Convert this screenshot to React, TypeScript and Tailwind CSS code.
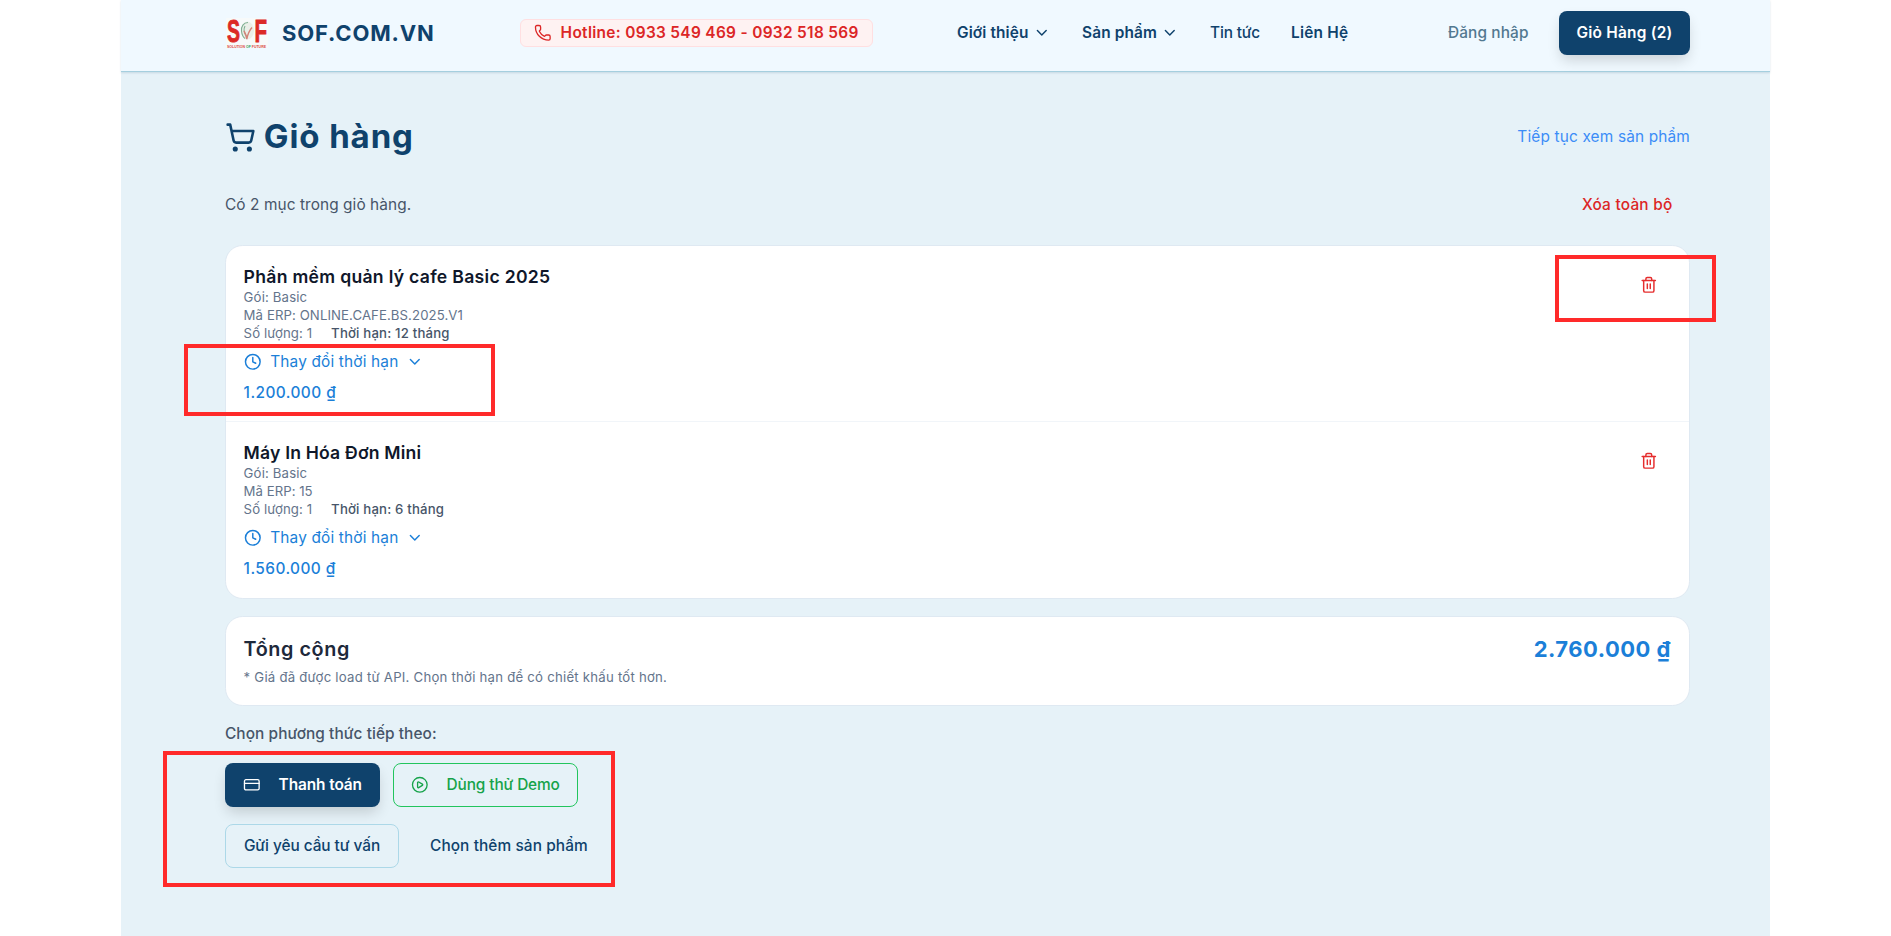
import type { ReactNode } from 'react';
import {
  ChevronDown,
  CirclePlay,
  Clock,
  CreditCard,
  Phone,
  ShoppingCart,
  Trash2,
} from 'lucide-react';

interface CartItem {
  name: string;
  nameClass: string;
  plan: string;
  erp: string;
  erpClass: string;
  quantity: number;
  duration: string;
  price: string;
}

const items: CartItem[] = [
  {
    name: 'Phần mềm quản lý cafe Basic 2025',
    nameClass: 'tracking-[0.29px]',
    plan: 'Basic',
    erp: 'ONLINE.CAFE.BS.2025.V1',
    erpClass: 'tracking-[0.09px]',
    quantity: 1,
    duration: '12 tháng',
    price: '1.200.000 ₫',
  },
  {
    name: 'Máy In Hóa Đơn Mini',
    nameClass: 'tracking-[0.18px]',
    plan: 'Basic',
    erp: '15',
    erpClass: 'tracking-[0.03px]',
    quantity: 1,
    duration: '6 tháng',
    price: '1.560.000 ₫',
  },
];

function Logo() {
  return (
    <svg viewBox="0 -6 44 44" className="size-11 shrink-0 overflow-visible">
      <rect x="1" y="1" width="42" height="30" rx="1" fill="#f7fafa" />
      <text
        x="2"
        y="25"
        textLength="13"
        lengthAdjust="spacingAndGlyphs"
        stroke="#dc2a26"
        strokeWidth="0.9"
        className="fill-[#dc2a26] font-['Liberation_Sans'] text-[31px] font-bold"
      >
        S
      </text>
      <text
        x="29.5"
        y="25"
        textLength="12.5"
        lengthAdjust="spacingAndGlyphs"
        stroke="#dc2a26"
        strokeWidth="0.9"
        className="fill-[#dc2a26] font-['Liberation_Sans'] text-[31px] font-bold"
      >
        F
      </text>
      <ellipse cx="22.5" cy="13.5" rx="6.5" ry="9" fill="#ebefe8" />
      <path
        d="M23 5.500c-4.500 0-7 4-6.500 8.500 .3 3 1.500 6 3.500 7.500M20 9c-1.500 3-1 7 1.500 10"
        fill="none"
        stroke="#7fb092"
        strokeWidth="1.1"
      />
      <path
        d="M19 14c1.300 2 2 4.500 2.800 8 1-5 2.500-8.500 5.200-11.500"
        fill="none"
        stroke="#d58378"
        strokeWidth="1.4"
      />
      <text
        x="2"
        y="30.5"
        textLength="39"
        lengthAdjust="spacingAndGlyphs"
        className="fill-[#dc4a44] font-['Liberation_Sans'] text-[4px] font-bold"
      >
        SOLUTION <tspan fill="#2f9a55">OF</tspan> FUTURE
      </text>
    </svg>
  );
}

function NavItem({ children, className }: { children: ReactNode; className: string }) {
  return (
    <a href="#" className={`flex items-center whitespace-nowrap ${className}`}>
      {children}
    </a>
  );
}

function Header() {
  return (
    <header className="h-[72px] border-b border-[#a5cfdf] bg-[#f0f9ff] pr-[79px] pl-[104px] shadow-[0_1px_2px_rgba(15,66,108,0.15)]">
      <div className="flex h-[66px] items-center text-[15.4px] font-semibold text-[#0f426c]">
        <a href="#" className="flex w-[295px] shrink-0 items-center">
          <Logo />
          <span className="ml-[13px] text-[22px] font-bold tracking-[0.84px]">
            SOF.COM.VN
          </span>
        </a>
        <a
          href="#"
          className="flex h-7 w-[353px] shrink-0 items-center rounded-md border border-[#ffdfe1] bg-[#fef2f2] pl-[13px] whitespace-nowrap text-[#dc2626]"
        >
          <Phone className="size-[17.6px]" strokeWidth={1.8} />
          <span className="ml-[9px] tracking-[0.33px]">
            Hotline: 0933 549 469 - 0932 518 569
          </span>
        </a>
        <nav className="ml-[84px] flex w-[491px] shrink-0 items-center">
          <NavItem className="w-[125px] tracking-[0.13px]">
            Giới thiệu
            <ChevronDown className="ml-1 size-[17.6px]" />
          </NavItem>
          <NavItem className="w-[128px] tracking-[0.14px]">
            Sản phẩm
            <ChevronDown className="ml-1 size-[17.6px]" />
          </NavItem>
          <NavItem className="w-[81px] font-medium tracking-[-0.15px]">Tin tức</NavItem>
          <NavItem className="tracking-[0.23px]">Liên Hệ</NavItem>
        </nav>
        <a
          href="#"
          className="w-[111px] shrink-0 font-medium tracking-[0.12px] whitespace-nowrap text-[#527890]"
        >
          Đăng nhập
        </a>
        <button className="h-11 w-[131px] shrink-0 rounded-lg bg-[#0f426c] font-semibold tracking-[0.24px] text-white shadow-[0_7px_14px_-2px_rgba(0,0,0,0.16)]">
          Giỏ Hàng (2)
        </button>
      </div>
    </header>
  );
}

function CartRow({ item }: { item: CartItem }) {
  return (
    <li className="flex h-[176px] justify-between pt-[17px] pr-[18px] pl-[17.6px]">
      <div>
        <h2
          className={`pt-px text-[17.6px] leading-[26.4px] font-semibold text-[#0f172a] ${item.nameClass}`}
        >
          {item.name}
        </h2>
        <div className="-mt-px text-[13.2px] leading-[17.6px] text-[#64748b]">
          <p className="tracking-[0.15px]">Gói: {item.plan}</p>
          <p className={item.erpClass}>Mã ERP: {item.erp}</p>
          <p className="flex">
            <span className="w-[87.500px] tracking-[0.08px]">Số lượng: {item.quantity}</span>
            <span className="font-medium tracking-[0.18px] text-[#475569]">
              Thời hạn: {item.duration}
            </span>
          </p>
        </div>
        <button className="mt-[8.8px] flex h-[22px] items-center text-[15.4px] text-[#1b7fd8]">
          <Clock className="size-[17.6px]" />
          <span className="ml-[9px] tracking-[0.17px]">Thay đổi thời hạn</span>
          <ChevronDown className="ml-2 size-[17.6px]" />
        </button>
        <p className="mt-[8.8px] text-[15.4px] leading-[22px] font-medium tracking-[0.44px] text-[#1b7fd8]">
          {item.price}
        </p>
      </div>
      <button className="flex size-[44px] items-center justify-center text-[#e52d2d]">
        <Trash2 className="size-[17.6px]" />
      </button>
    </li>
  );
}

export default function App() {
  return (
    <div className="relative h-[936px] overflow-hidden bg-white font-[Inter,sans-serif]">
      <div className="ml-[121px] h-full w-[1649px] bg-[#e6f2f8]">
        <Header />
        <main className="w-[1569px] pt-[43px] pl-[104px]">
          <div className="flex h-11 items-center justify-between">
            <h1 className="flex items-center text-[33px] font-bold tracking-[0.9px] text-[#0f426c]">
              <ShoppingCart className="mr-2 size-[30.8px]" />
              Giỏ hàng
            </h1>
            <a href="#" className="text-[15.4px] tracking-[0.16px] text-[#3b8cf7]">
              Tiếp tục xem sản phẩm
            </a>
          </div>

          <div className="mt-[24px] flex h-11 items-center justify-between pr-[17.6px] text-[15.4px]">
            <p className="tracking-[0.08px] text-[#475569]">Có 2 mục trong giỏ hàng.</p>
            <button className="font-medium tracking-[0.22px] text-[#dc2626]">
              Xóa toàn bộ
            </button>
          </div>

          <ul className="mt-[18px] divide-y divide-[#f1f5f9] rounded-[17.6px] border border-[#dfe9f2] bg-white">
            {items.map((item) => (
              <CartRow key={item.name} item={item} />
            ))}
          </ul>

          <section className="mt-[17px] flex h-[90px] justify-between rounded-[17.6px] border border-[#dfe9f2] bg-white pt-[17px] pr-[18px] pl-[17.6px]">
            <div>
              <h2 className="text-[19.8px] leading-[30.8px] font-semibold tracking-[0.58px] text-[#1e293b]">
                Tổng cộng
              </h2>
              <p className="mt-1 text-[13.2px] leading-[17.6px] tracking-[0.23px] text-[#64748b]">
                * Giá đã được load từ API. Chọn thời hạn để có chiết khấu tốt hơn.
              </p>
            </div>
            <p className="text-[22px] leading-[30.8px] font-bold tracking-[0.5px] text-[#1b7fd8]">
              2.760.000 ₫
            </p>
          </section>

          <p className="mt-[17px] text-[15.4px] leading-[22px] font-medium tracking-[0.07px] text-[#475569]">
            Chọn phương thức tiếp theo:
          </p>

          <div className="mt-[18px] flex gap-[13px] text-[15.4px]">
            <button className="flex h-11 w-[155px] items-center rounded-lg bg-[#0f426c] pl-[18px] font-semibold tracking-[-0.09px] whitespace-nowrap text-white shadow-[0_7px_14px_-2px_rgba(0,0,0,0.16)]">
              <CreditCard className="mr-[18px] size-[17.6px]" strokeWidth={1.8} />
              Thanh toán
            </button>
            <button className="flex h-11 w-[185px] items-center rounded-lg border border-[#22c55e] pl-[17px] font-medium tracking-[-0.12px] whitespace-nowrap text-[#16a34a]">
              <CirclePlay className="mr-[18px] size-[17.6px]" strokeWidth={1.8} />
              Dùng thử Demo
            </button>
          </div>
          <div className="mt-[17px] flex gap-[31px] text-[15.4px] font-medium text-[#0f426c]">
            <button className="h-11 w-[174px] rounded-lg border border-[#acd8e8] tracking-[-0.05px] whitespace-nowrap">
              Gửi yêu cầu tư vấn
            </button>
            <button className="h-11 tracking-[0.09px] whitespace-nowrap">
              Chọn thêm sản phẩm
            </button>
          </div>
        </main>
      </div>

      {/* highlight frames over the areas explained in the guide */}
      <div className="absolute top-[255px] left-[1555px] h-[67px] w-[161px] border-4 border-[#ff2a2a]" />
      <div className="absolute top-[344px] left-[184px] h-[72px] w-[311px] border-4 border-[#ff2a2a]" />
      <div className="absolute top-[751px] left-[163px] h-[136px] w-[452px] border-4 border-[#ff2a2a]" />
    </div>
  );
}
